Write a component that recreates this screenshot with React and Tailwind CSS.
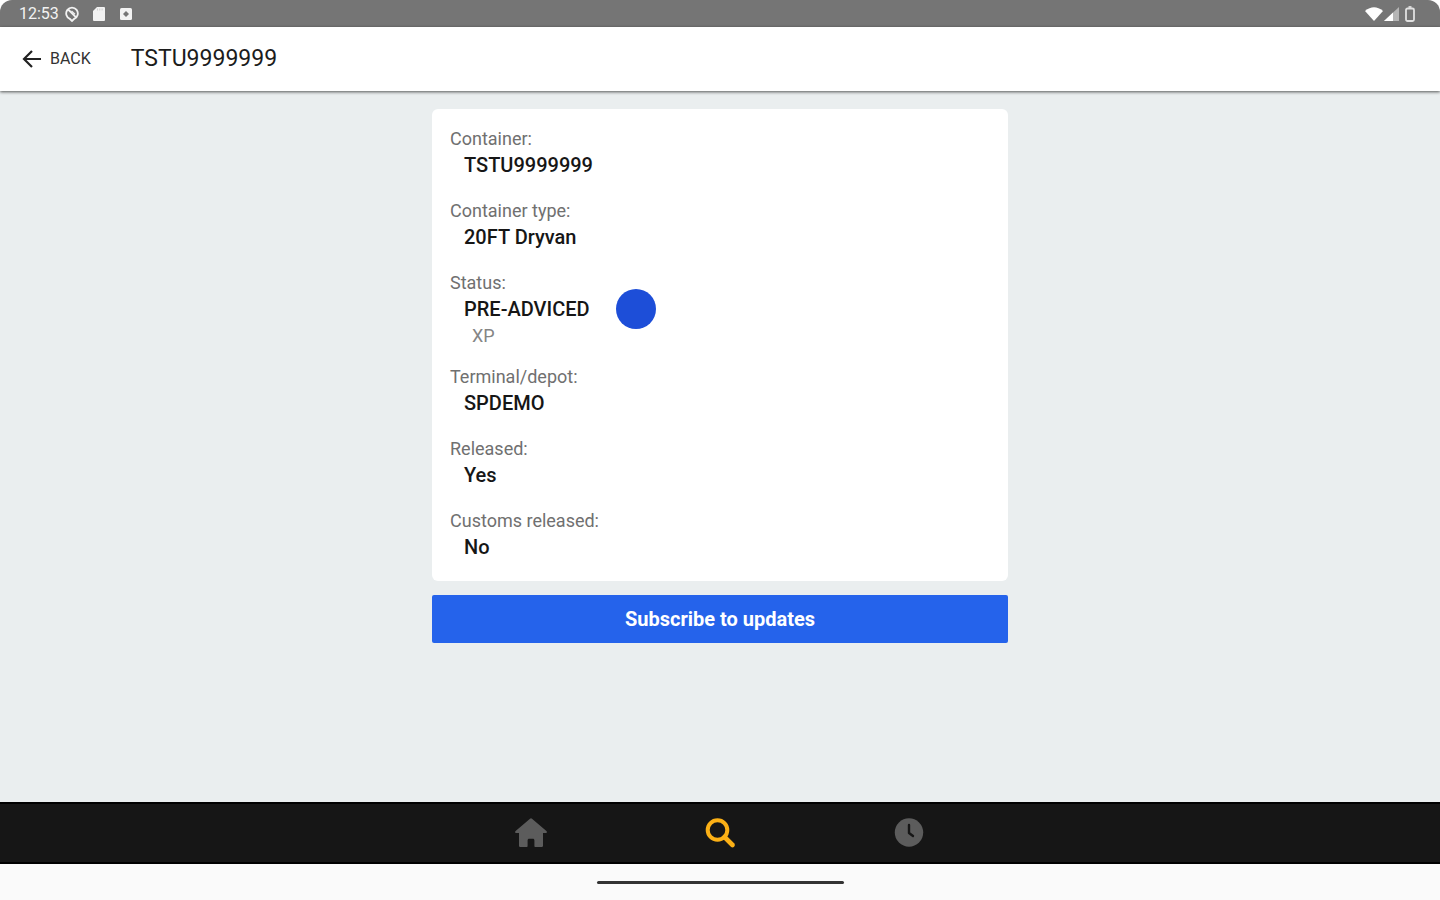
import React, { useState } from 'react';

const details = [
  { label: 'Container:', value: 'TSTU9999999' },
  { label: 'Container type:', value: '20FT Dryvan' },
  { label: 'Status:', value: 'PRE-ADVICED', code: 'XP' },
  { label: 'Terminal/depot:', value: 'SPDEMO' },
  { label: 'Released:', value: 'Yes' },
  { label: 'Customs released:', value: 'No' },
];

const HomeIcon = () => (
  <svg viewBox="0 0 32 32" className="size-8" fill="currentColor">
    <path d="M15 1.800a1.400 1.400 0 0 1 2 0L31.400 14c.9.9.5 2-.7 2H28v12.400c0 1-.6 1.600-1.600 1.600h-5.900c-.7 0-1.100-.4-1.100-1.100v-5.500c0-1-.6-1.600-1.600-1.600h-3.600c-1 0-1.600.6-1.600 1.600v5.500c0 .7-.4 1.100-1.100 1.100H5.600c-1 0-1.600-.6-1.600-1.600V16H1.300c-1.200 0-1.600-1.100-.7-2z" />
  </svg>
);

const SearchIcon = () => (
  <svg viewBox="0 0 32 32" className="size-8" fill="none" stroke="currentColor">
    <circle cx="13.500" cy="13" r="9.800" strokeWidth="4" />
    <path d="M20.500 20l8 8" strokeWidth="4.600" strokeLinecap="round" />
  </svg>
);

const ClockIcon = () => (
  <svg viewBox="0 0 32 32" className="size-8">
    <circle cx="16" cy="15.500" r="14.200" fill="currentColor" />
    <path d="M16 8v8l4 3" fill="none" stroke="#161616" strokeWidth="2.400" strokeLinecap="round" strokeLinejoin="round" />
  </svg>
);

const tabs = [
  { id: 'home', label: 'Home', Icon: HomeIcon },
  { id: 'search', label: 'Search', Icon: SearchIcon },
  { id: 'history', label: 'History', Icon: ClockIcon },
];

// Android status bar, with the rounded corners of the display
const StatusBar = () => (
  <div className="bg-white">
    <div className="h-[27px] bg-[#757575] rounded-t-xl flex items-center justify-between pl-[19px] pr-[25px] text-[#f2f2f2]">
      <div className="flex items-center">
        <span className="text-base w-[46px]">12:53</span>
        <svg viewBox="0 0 14 16" className="w-3.5 h-4" fill="none" stroke="currentColor" strokeWidth="1.800">
          <path d="M4.800 12.800A5.800 5.800 0 1 1 9.200 12.800L7 15z" />
          <path d="M3.200 3.500l7.600 7.600" />
          <path d="M6.500 5l3.500 3.300" strokeWidth="1.200" />
        </svg>
        <svg viewBox="0 0 12 14" className="ml-3.5 w-3 h-3.5" fill="currentColor">
          <path d="M4 0h7a1 1 0 0 1 1 1v12a1 1 0 0 1-1 1H1a1 1 0 0 1-1-1V4z" />
          <path d="M4.500 1.500v2M6.800 1.500v2M9.100 1.500v2" stroke="#cfcfcf" strokeWidth="1" />
        </svg>
        <svg viewBox="0 0 12 12" className="ml-[15px] size-3">
          <rect width="12" height="12" rx="1.500" fill="currentColor" />
          <path d="M6 3l3 3-3 3-3-3z" fill="#757575" />
        </svg>
      </div>
      <div className="flex items-center">
        <svg viewBox="0 0 18 14" className="w-[18px] h-3.5" fill="#ffffff">
          <path d="M0 4Q9-3.500 18 4L9 14z" />
        </svg>
        <svg viewBox="0 0 15 14" className="ml-px w-[15px] h-3.5">
          <path d="M0 14L15 0v14z" fill="#b5b5b5" />
          <path d="M0 14L9 5.600V14z" fill="#ffffff" />
        </svg>
        <svg viewBox="0 0 10 16" className="ml-1.5 w-2.5 h-4" fill="none" stroke="#e0e0e0" strokeWidth="1.800">
          <rect x="1" y="2.500" width="8" height="12.500" rx="1.500" />
          <path d="M3.500 1h3" />
        </svg>
      </div>
    </div>
  </div>
);

const Detail = ({ label, value, code }) => (
  <div>
    <dt className="text-lg leading-6 text-[#707070]">{label}</dt>
    <dd className="pl-3.5">
      <div className="flex items-center h-7 text-xl font-medium text-[#161616]">
        {value}
        {code && <span className="ml-[26px] -my-1.5 size-10 rounded-full bg-[#1d4ed8]" />}
      </div>
      {code && <div className="mt-1 pl-2 text-lg leading-[18px] text-[#858585]">{code}</div>}
    </dd>
  </div>
);

const App = () => {
  const [tab, setTab] = useState('search');
  const [subscribed, setSubscribed] = useState(false);

  return (
    <div className="min-h-screen flex flex-col bg-[#eaeeef] font-[Roboto,sans-serif]">
      <StatusBar />

      <header className="relative h-16 bg-white flex items-center pl-[22px] shadow-[0_1px_3px_rgba(0,0,0,0.65)]">
        <button className="flex items-center gap-2 text-base text-[#333333]">
          <svg viewBox="0 0 20 20" className="size-5" fill="none" stroke="#222222" strokeWidth="2.200">
            <path d="M19 10H2M10 2l-8 8 8 8" />
          </svg>
          BACK
        </button>
        <h1 className="ml-10 text-[23px] leading-7 text-[#1c1c1c]">TSTU9999999</h1>
      </header>

      <main className="flex-1 w-2/5 mx-auto pt-[18px]">
        <dl className="flex flex-col gap-5 bg-white rounded-md px-[18px] pt-[18px] pb-5">
          {details.map((item) => (
            <Detail key={item.label} {...item} />
          ))}
        </dl>
        <button
          onClick={() => setSubscribed(!subscribed)}
          className="mt-3.5 w-full h-12 rounded-xs bg-[#2563eb] text-white text-xl font-bold"
        >
          Subscribe to updates
        </button>
      </main>

      <nav className="h-[62px] bg-[#161616] flex justify-center border-y-2 border-black">
        {tabs.map(({ id, label, Icon }) => (
          <button
            key={id}
            aria-label={label}
            onClick={() => setTab(id)}
            className={`w-[189px] flex items-center justify-center ${tab === id ? 'text-[#fbb016]' : 'text-[#5c5c5c]'}`}
          >
            <Icon />
          </button>
        ))}
      </nav>

      {/* gesture bar */}
      <div className="h-9 bg-[#fafafa] flex items-center justify-center">
        <div className="w-[247px] h-[3px] rounded-full bg-[#333333]" />
      </div>
    </div>
  );
};

export default App;
